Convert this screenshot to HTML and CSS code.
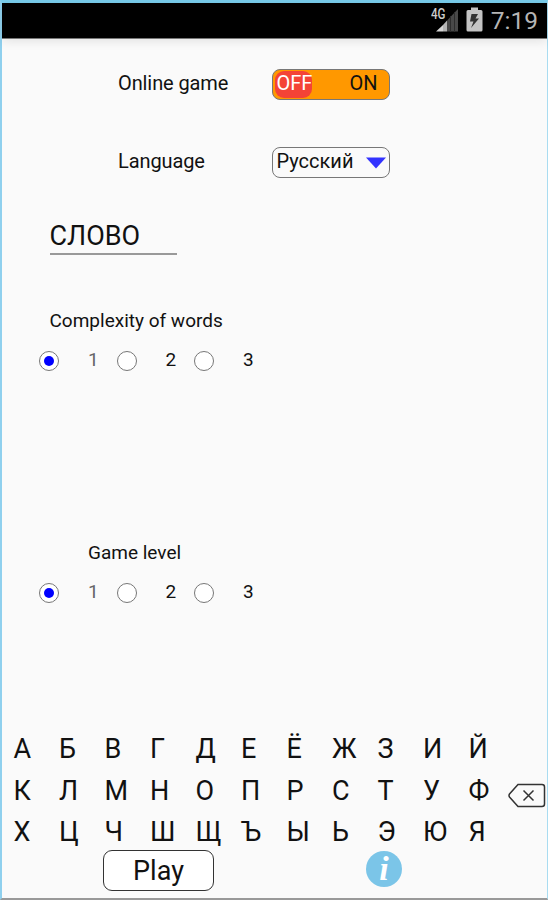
FILE: index.html
```html
<!DOCTYPE html>
<html lang="en">
<head>
    <meta charset="UTF-8"/>
    <meta name="viewport" content="width=device-width, initial-scale=1.0">
    <title>Game settings</title>
    <link rel="stylesheet" href="styles.css">
</head>
<body>
    <div class="screen">
        <div class="status-bar">
            <svg class="signal" width="28" height="30" viewBox="0 0 28 30">
                <path d="M5 27.500 L12 21 V27.500 Z" fill="#d5d5d5"/>
                <path d="M12 21 L16 16.500 V27.500 H12 Z" fill="#b5b5b5"/>
                <path d="M16 16.500 L27 5 V27.500 H16 Z" fill="#484848"/>
                <path d="M19.500 12 V28 M23.500 8 V28" stroke="#2c2c2c"/>
                <text x="0" y="14.500" class="network" textLength="14.500" lengthAdjust="spacingAndGlyphs">4G</text>
            </svg>
            <svg class="battery" width="17" height="26" viewBox="0 0 17 26">
                <path d="M5 0.500 H12 V3 H15 Q16.500 3 16.500 4.500 V23 Q16.500 24.500 15 24.500 H2 Q0.500 24.500 0.500 23 V4.500 Q0.500 3 2 3 H5 Z" fill="#c4c4c4"/>
                <path d="M5.500 7 H12 L9.500 11.500 H13 L5 21 L7.500 14.500 H4 Z" fill="#333"/>
            </svg>
            <span class="clock">7:19</span>
        </div>

        <div class="setting">
            <span class="label">Online game</span>
            <div class="switch">
                <span class="off">OFF</span>
                <span class="on">ON</span>
            </div>
        </div>
        <div class="setting language">
            <span class="label">Language</span>
            <div class="select">
                <span>Русский</span>
                <svg width="20" height="12" viewBox="0 0 20 12"><path d="M0 0.500 H20 L10 11.500 Z" fill="#3333ff"/></svg>
            </div>
        </div>

        <div class="word">СЛОВО</div>

        <div class="group complexity">
            <h2>Complexity of words</h2>
            <div class="radios">
                <label><i class="radio checked"></i><span class="faded">1</span></label>
                <label><i class="radio"></i><span>2</span></label>
                <label><i class="radio"></i><span>3</span></label>
            </div>
        </div>
        <div class="group level">
            <h2>Game level</h2>
            <div class="radios">
                <label><i class="radio checked"></i><span class="faded">1</span></label>
                <label><i class="radio"></i><span>2</span></label>
                <label><i class="radio"></i><span>3</span></label>
            </div>
        </div>

        <div class="keyboard">
            <div class="keys">
                <span>А</span><span>Б</span><span>В</span><span>Г</span><span>Д</span><span>Е</span><span>Ё</span><span>Ж</span><span>З</span><span>И</span><span>Й</span>
                <span>К</span><span>Л</span><span>М</span><span>Н</span><span>О</span><span>П</span><span>Р</span><span>С</span><span>Т</span><span>У</span><span>Ф</span>
                <span>Х</span><span>Ц</span><span>Ч</span><span>Ш</span><span>Щ</span><span>Ъ</span><span>Ы</span><span>Ь</span><span>Э</span><span>Ю</span><span>Я</span>
            </div>
            <svg class="backspace" width="38" height="25" viewBox="0 0 38 25">
                <path d="M10 1.500 H34 Q36.500 1.500 36.500 4 V21 Q36.500 23.500 34 23.500 H10 L1.500 14 Q0.500 12.500 1.500 11 Z" fill="none" stroke="#333" stroke-width="1.500"/>
                <path d="M15.500 7.500 L25.500 17.500 M25.500 7.500 L15.500 17.500" stroke="#333" stroke-width="1.500"/>
            </svg>
        </div>

        <div class="footer">
            <button class="play">Play</button>
            <div class="info"><span>i</span></div>
        </div>
    </div>
</body>
</html>
```
FILE: styles.css
```css
* {
    margin: 0;
    padding: 0;
    box-sizing: border-box;
}
body {
    width: 548px;
    height: 900px;
    overflow: hidden;
    font-family: Roboto, Arial, sans-serif;
    color: #111;
    background-color: #fafafa;
}
.screen {
    display: flex;
    flex-direction: column;
    height: 900px;
    border-top: 3px solid #79cdec;
    border-left: 2px solid #8fd0ee;
    border-right: 1px solid #a9dcf1;
    border-bottom: 2px solid #999;
}
.status-bar {
    display: flex;
    align-items: flex-start;
    justify-content: flex-end;
    height: 36px;
    padding-right: 9px;
    background-color: #000;
    border-bottom: 1px solid #777;
    box-shadow: 0 2px 10px rgba(0, 0, 0, 0.1);
}
.signal {
    margin-top: 1px;
    margin-right: 7px;
}
.network {
    font-size: 14px;
    font-weight: 500;
    fill: #ccc;
}
.battery {
    margin-top: 4px;
    margin-right: 8px;
}
.clock {
    font-size: 24.500px;
    line-height: 35px;
    color: #b5b5b5;
}
.setting {
    display: flex;
    height: 31px;
    margin-top: 30px;
    padding-left: 116px;
    font-size: 20px;
}
.setting.language {
    margin-top: 47px;
}
.label {
    width: 153.500px;
    line-height: 28px;
    letter-spacing: -0.100px;
}
.switch, .select {
    display: flex;
    justify-content: space-between;
    width: 118px;
    border: 1px solid #777;
    border-radius: 8px;
}
.switch {
    padding: 1px 11px 1px 2px;
    background-color: #ff9800;
    line-height: 25px;
}
.off {
    width: 37px;
    padding-left: 2px;
    background-color: #f44336;
    border-radius: 9px;
    color: #fff;
}
.select {
    align-items: center;
    padding: 0 3px 0 4px;
    line-height: 26px;
}
.select span {
    margin-bottom: 3px;
}
.word {
    width: 127px;
    height: 35px;
    margin: 42px 0 0 47.500px;
    border-bottom: 2px solid #999;
    font-size: 27px;
    line-height: 32px;
}
.group h2 {
    font-size: 19px;
    font-weight: normal;
    line-height: 24px;
}
.complexity {
    height: 232px;
    margin-top: 54px;
}
.complexity h2 {
    padding-left: 47.500px;
}
.level {
    height: 187px;
}
.level h2 {
    padding-left: 86px;
}
.radios {
    display: flex;
    margin-top: 15px;
    padding-left: 37px;
    font-size: 19px;
}
.radios label {
    display: flex;
    align-items: center;
    gap: 29px;
    width: 77.500px;
}
.radios span {
    line-height: 24px;
    margin-bottom: 2px;
}
.radio {
    display: flex;
    align-items: center;
    justify-content: center;
    width: 20px;
    height: 20px;
    border: 1px solid #777;
    border-radius: 50%;
    background-color: #fff;
}
.radio.checked::after {
    content: "";
    width: 10px;
    height: 10px;
    border-radius: 50%;
    background-color: #00f;
}
.faded {
    color: #666;
}
.keyboard {
    display: flex;
    align-items: flex-start;
    height: 122px;
    padding-left: 11.500px;
}
.keys {
    display: grid;
    grid-template-columns: repeat(11, 45.500px);
    grid-auto-rows: 41.700px;
    width: 494px;
    font-size: 27px;
    line-height: 42px;
}
.backspace {
    flex-shrink: 0;
    margin-top: 55px;
}
.footer {
    display: flex;
    padding-left: 101px;
}
.play {
    width: 111px;
    height: 41px;
    border: 1.500px solid #333;
    border-radius: 9px;
    background-color: #fff;
    font-family: inherit;
    font-size: 27px;
    line-height: 36px;
    color: #111;
}
.info {
    width: 36px;
    height: 36px;
    margin: 1px 0 0 152px;
    border-radius: 50%;
    background-color: #7bc5e8;
    font-family: "Liberation Serif", serif;
    font-size: 34px;
    font-style: italic;
    font-weight: bold;
    line-height: 35px;
    text-align: center;
    color: #fff;
}
```
